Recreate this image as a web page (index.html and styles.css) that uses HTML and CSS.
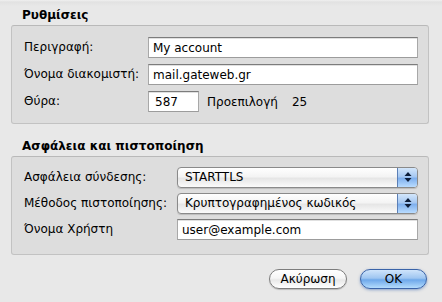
FILE: index.html
```html
<!DOCTYPE html>
<html lang="el">
<head>
    <meta charset="UTF-8">
    <meta name="viewport" content="width=device-width, initial-scale=1.0">
    <title>Ρυθμίσεις λογαριασμού</title>
    <link rel="stylesheet" href="styles.css">
</head>
<body>
    <div class="sheet">
      <h2 class="group_title">Ρυθμίσεις</h2>
      <div class="group server">
        <span class="label">Περιγραφή:</span>
        <div class="field">My account</div>

        <span class="label">Όνομα διακομιστή:</span>
        <div class="field">mail.gateweb.gr</div>

        <span class="label">Θύρα:</span>
        <div class="port_row">
          <div class="field port">587</div>
          <span class="hint">Προεπιλογή</span>
          <span class="hint_value">25</span>
        </div>
      </div>

      <h2 class="group_title second">Ασφάλεια και πιστοποίηση</h2>
      <div class="group security">
        <span class="label">Ασφάλεια σύνδεσης:</span>
        <div class="popup">
          <span class="popup_text">STARTTLS</span>
          <span class="popup_arrows">
            <svg width="8" height="12" viewBox="0 0 8 12"><path d="M4 1 L7.5 5 H0.5 Z M4 11 L7.5 7 H0.5 Z" fill="#0d1e3a"/></svg>
          </span>
        </div>

        <span class="label">Μέθοδος πιστοποίησης:</span>
        <div class="popup">
          <span class="popup_text">Κρυπτογραφημένος κωδικός</span>
          <span class="popup_arrows">
            <svg width="8" height="12" viewBox="0 0 8 12"><path d="M4 1 L7.5 5 H0.5 Z M4 11 L7.5 7 H0.5 Z" fill="#0d1e3a"/></svg>
          </span>
        </div>

        <span class="label">Όνομα Χρήστη</span>
        <div class="field">user@example.com</div>
      </div>

      <div class="buttons">
        <button class="btn cancel">Ακύρωση</button>
        <button class="btn ok">OK</button>
      </div>
    </div>
</body>
</html>
```

FILE: styles.css
```css
body{
    margin: 0;
    padding: 0;
    background-color: #e8e8e8;
    font-family: "DejaVu Sans", "Liberation Sans", sans-serif;
    font-size: 12px;
    color: #000;
}
.sheet{
    width: 442px;
    height: 302px;
    box-sizing: border-box;
    padding: 8px 13px 0 11px;
    background: linear-gradient(#f0f0f0 0px, #e2e2e2 2px, #e8e8e8 6px);
}
.group_title{
    margin: 0 0 2px 11px;
    font-size: 12px;
    font-weight: bold;
    line-height: 15px;
}
.group_title.second{
    margin-top: 15px;
}
.group{
    display: grid;
    align-items: center;
    row-gap: 6px;
    padding: 11px 10px 11px 12px;
    background-color: #dddddd;
    border: 1px solid #c2c2c2;
    border-top-color: #b9b9b9;
    border-radius: 3px;
    height: 99px;
    box-sizing: border-box;
}
.server{
    grid-template-columns: 124px 1fr;
    grid-auto-rows: 21px;
}
.security{
    grid-template-columns: 153px 1fr;
    grid-auto-rows: 20px;
    padding-top: 10px;
}
.label{
    line-height: 15px;
}
.field{
    height: 21px;
    box-sizing: border-box;
    padding: 0 4px;
    line-height: 20px;
    background-color: #fff;
    border: 1px solid #9c9c9c;
    border-top-color: #7c7c7c;
    border-left-color: #a8a8a8;
    border-right-color: #a8a8a8;
    box-shadow: inset 0 1px 0 #e0e0e0;
    white-space: nowrap;
}
.port_row{
    display: flex;
    align-items: center;
}
.field.port{
    width: 51px;
    padding-left: 6px;
}
.hint{
    margin-left: 8px;
}
.hint_value{
    margin-left: 14px;
}
.popup{
    display: flex;
    height: 19px;
    border: 1px solid #8a8a8a;
    border-radius: 4px;
    overflow: hidden;
    background: linear-gradient(#ffffff 0%, #f4f4f4 45%, #e6e6e6 55%, #fbfbfb 100%);
    box-shadow: 0 1px 1px rgba(0, 0, 0, 0.15);
}
.popup_text{
    flex: 1;
    padding-left: 7px;
    line-height: 19px;
}
.popup_arrows{
    width: 19px;
    display: flex;
    align-items: center;
    justify-content: center;
    border-left: 1px solid #5b7fb6;
    background: linear-gradient(#d3e6fb 0%, #a6c8f2 45%, #7fb0ee 55%, #b9dcff 100%);
}
.buttons{
    display: flex;
    justify-content: flex-end;
    gap: 13px;
    margin-top: 14px;
    padding-right: 2px;
}
.btn{
    font-family: "DejaVu Sans", "Liberation Sans", sans-serif;
    font-size: 12px;
    height: 20px;
    padding: 0;
    border-radius: 10px;
    line-height: 18px;
    color: #000;
}
.cancel{
    width: 78px;
    border: 1px solid #7d7d7d;
    background: linear-gradient(#ffffff 0%, #f6f6f6 45%, #e8e8e8 55%, #ffffff 100%);
    box-shadow: 0 1px 1px rgba(0, 0, 0, 0.2);
}
.ok{
    width: 67px;
    border: 1px solid #3a63a8;
    background: linear-gradient(#cfe4fb 0%, #9fc6f1 45%, #6ea8ea 55%, #b4dcfd 100%);
    box-shadow: 0 1px 3px rgba(40, 90, 170, 0.5);
}
```
